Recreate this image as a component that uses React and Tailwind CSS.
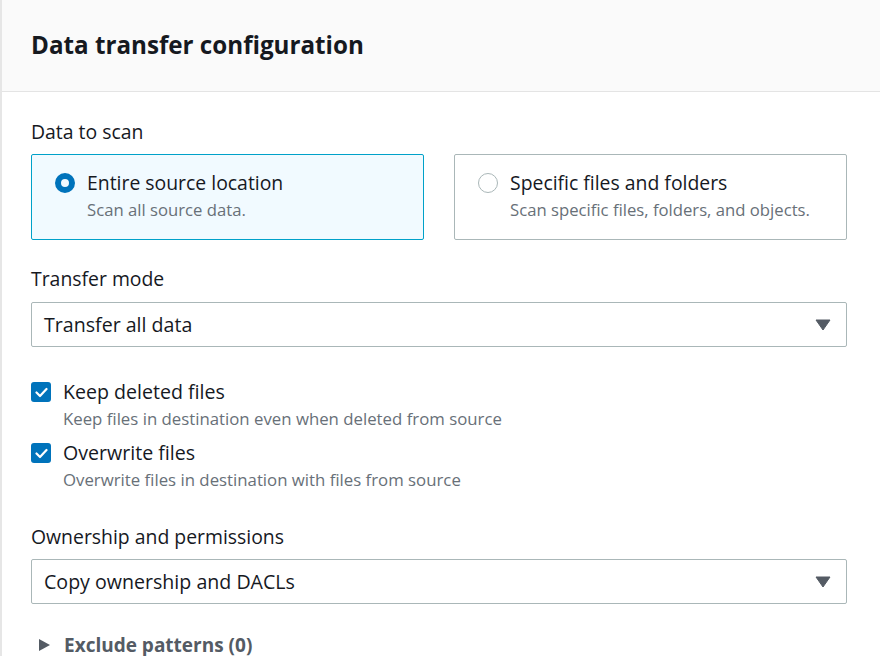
import React from "react";

const Caret = () => (
  <svg width="16" height="12" viewBox="0 0 16 12"><path d="M1 1 H15 L8 11 Z" fill="#545b64" stroke="#545b64" strokeWidth="1" strokeLinejoin="round" /></svg>
);

const Check = () => (
  <div className="w-[20px] h-[20px] rounded-[3px] bg-[#0073bb] flex items-center justify-center shrink-0">
    <svg width="13" height="11" viewBox="0 0 13 11"><path d="M1.5 5.5 L5 9 L11.5 2" fill="none" stroke="white" strokeWidth="2.2" strokeLinecap="round" strokeLinejoin="round" /></svg>
  </div>
);

export default function App() {
  return (
    <div className="w-[880px] h-[656px] overflow-hidden bg-white border-l-2 border-[#e6e6e6] text-[#16191f]" style={{ fontFamily: '"Open Sans", "Noto Sans", sans-serif' }}>
      <div className="h-[92px] bg-[#fafafa] border-b border-[#e4e4e4] flex items-center pl-[29px]">
        <h2 className="text-[24.2px] font-bold leading-[30px] -mt-[2px]">Data transfer configuration</h2>
      </div>
      <div className="pl-[29px] pr-[33px]">
        <div className="pt-[27px] text-[19.4px] leading-[26px]">Data to scan</div>
        <div className="mt-[9px] grid grid-cols-2 gap-[30px]">
          <div className="h-[86px] rounded-[2px] border border-[#00a1c9] bg-[#f1faff] flex pl-[23px] pt-[15px]">
            <div className="w-[20px] h-[20px] rounded-full border-[6px] border-[#0073bb] mt-[3px] shrink-0" />
            <div className="ml-[12px]">
              <div className="text-[19.4px] leading-[26px]">Entire source location</div>
              <div className="text-[16.7px] leading-[24px] text-[#687078] mt-[2px]">Scan all source data.</div>
            </div>
          </div>
          <div className="h-[86px] rounded-[2px] border border-[#aab7b8] bg-white flex pl-[23px] pt-[15px]">
            <div className="w-[20px] h-[20px] rounded-full border-[1.5px] border-[#aab7b8] mt-[3px] shrink-0" />
            <div className="ml-[12px]">
              <div className="text-[19.4px] leading-[26px]">Specific files and folders</div>
              <div className="text-[16.7px] leading-[24px] text-[#687078] mt-[2px]">Scan specific files, folders, and objects.</div>
            </div>
          </div>
        </div>
        <div className="pt-[26px] text-[19.4px] leading-[26px]">Transfer mode</div>
        <div className="mt-[10px] h-[45px] rounded-[2px] border border-[#aab7b8] flex items-center justify-between pl-[12px] pr-[15px]">
          <span className="text-[19.6px] leading-[26px]">Transfer all data</span>
          <Caret />
        </div>
        <div className="mt-[35px] flex flex-col gap-[12px]">
          <div className="flex">
            <Check />
            <div className="ml-[12px] -mt-[3px]">
              <div className="text-[19.6px] leading-[26px]">Keep deleted files</div>
              <div className="text-[16.8px] leading-[24px] text-[#687078] mt-[2px]">Keep files in destination even when deleted from source</div>
            </div>
          </div>
          <div className="flex">
            <Check />
            <div className="ml-[12px] -mt-[3px]">
              <div className="text-[19.6px] leading-[26px]">Overwrite files</div>
              <div className="text-[16.8px] leading-[24px] text-[#687078] mt-[2px]">Overwrite files in destination with files from source</div>
            </div>
          </div>
        </div>
        <div className="pt-[32px] text-[19.4px] leading-[26px]">Ownership and permissions</div>
        <div className="mt-[9px] h-[45px] rounded-[2px] border border-[#aab7b8] flex items-center justify-between pl-[12px] pr-[15px]">
          <span className="text-[19.6px] leading-[26px]">Copy ownership and DACLs</span>
          <Caret />
        </div>
        <div className="mt-[28px] flex items-center pl-[7px]">
          <svg width="13" height="14" viewBox="0 0 13 14"><path d="M1 1 L12 7 L1 13 Z" fill="#545b64" /></svg>
          <span className="ml-[13px] text-[19px] leading-[26px] font-bold text-[#545b64]">Exclude patterns (0)</span>
        </div>
      </div>
    </div>
  );
}
